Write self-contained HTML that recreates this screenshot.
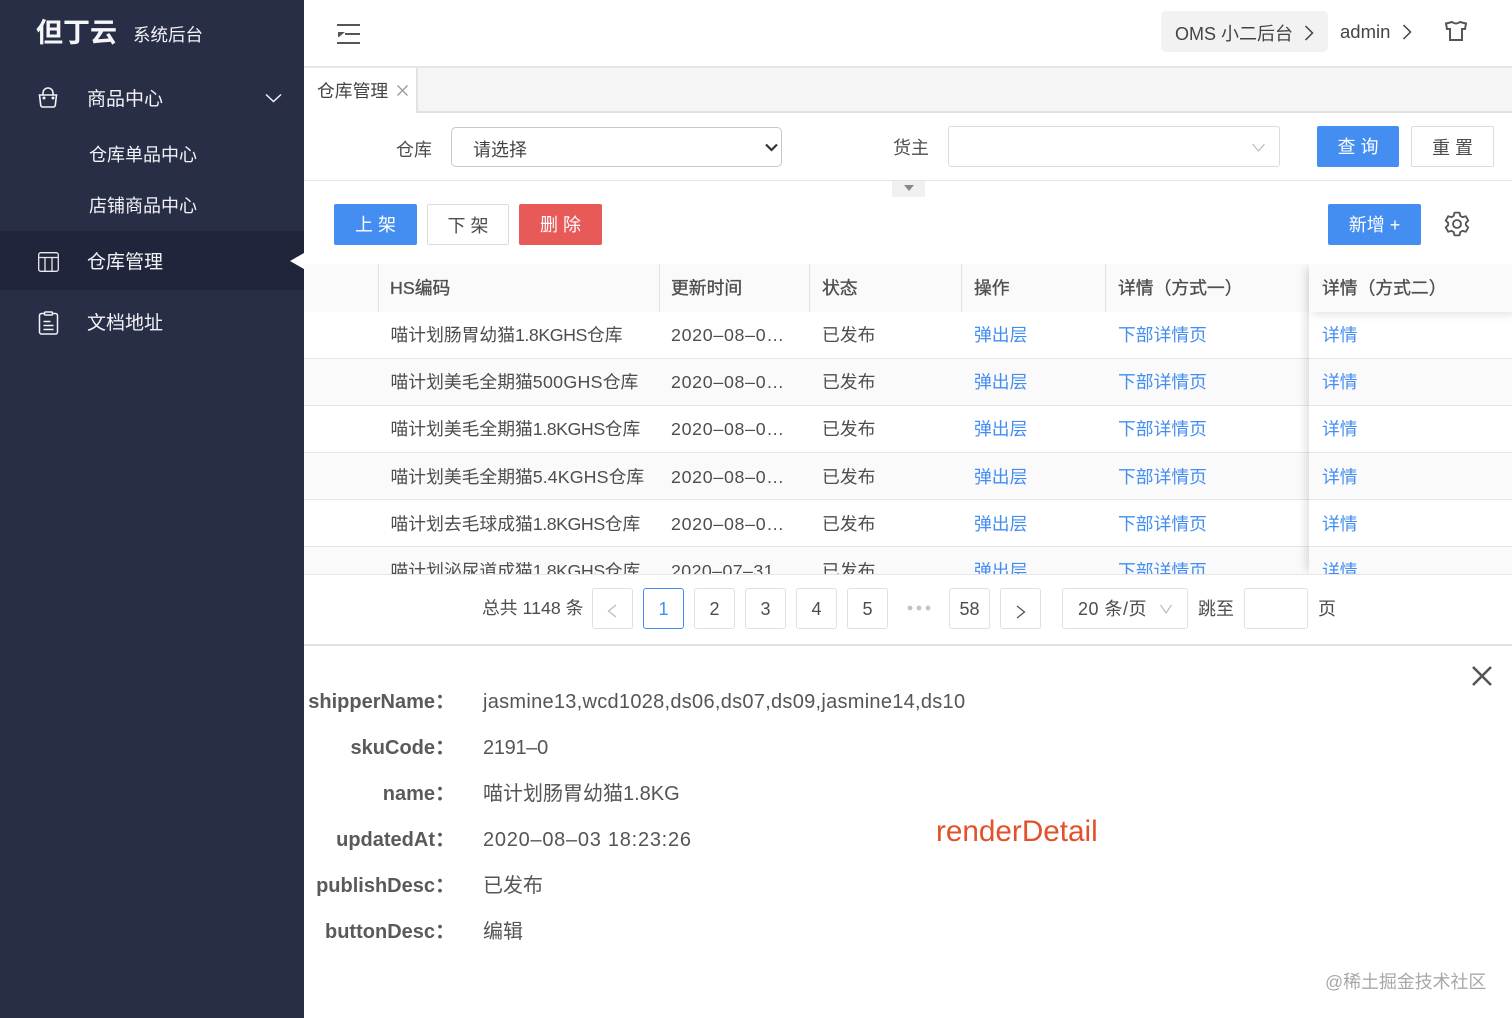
<!DOCTYPE html>
<html lang="zh"><head><meta charset="utf-8"><title>仓库管理</title>
<style>
*{box-sizing:border-box}
html,body{margin:0;padding:0;width:1512px;height:1018px;overflow:hidden;background:#fff}
body{position:relative;font-family:"Liberation Sans","Noto Sans CJK SC",sans-serif;color:#4d4d4d;font-size:17.8px}
.a{position:absolute;white-space:nowrap}
.t{position:absolute;white-space:nowrap;line-height:24px;height:24px}
.sb{position:absolute;left:0;top:0;width:304px;height:1018px;background:#292e47}
.w{color:#f2f3f6}
.btn{position:absolute;height:41px;line-height:42px;text-align:center;border-radius:2px;font-size:18px}
.blue{background:#448ef2;color:#fff}
.line{background:#fff;border:1px solid #dcdcdc;color:#4d4d4d}
.red{background:#e85a57;color:#fff}
.pg{position:absolute;top:588px;height:41px;width:41px;border:1px solid #e0e0e0;border-radius:3px;background:#fff;text-align:center;line-height:41px;font-size:18px;color:#4d4d4d}
.lk{color:#448ef2}
.lab{position:absolute;left:304px;width:152px;text-align:right;font-weight:bold;font-size:20px;line-height:28px;color:#5a5a5a;white-space:nowrap}
.val{position:absolute;left:483px;font-size:20px;line-height:28px;color:#555;white-space:nowrap}
svg{position:absolute;overflow:visible}
.th{color:#505050;-webkit-text-stroke:.35px #505050}
.n{letter-spacing:-.45px}
.d{letter-spacing:.7px}
</style></head><body>

<div class="sb"></div>
<div class="a" style="left:36px;top:10px;font-size:27px;line-height:42px;font-weight:bold;color:#f5f6f8;font-family:'Noto Sans CJK SC',sans-serif">但丁云</div>
<div class="t w" style="left:133px;top:23px;font-size:17.5px">系统后台</div>

<svg style="left:38px;top:87px" width="20" height="22" viewBox="0 0 20 22" fill="none" stroke="#f2f3f6" stroke-width="1.600"><path d="M1.500 8h17l-1.200 10a2 2 0 0 1-2 2H4.700a2 2 0 0 1-2-2z"/><path d="M5 8V6a5 5 0 0 1 10 0v2"/><circle cx="6" cy="11" r=".7" fill="#f2f3f6"/><circle cx="15" cy="11" r=".7" fill="#f2f3f6"/></svg>
<div class="t w" style="left:87px;top:88px;font-size:19px">商品中心</div>
<svg style="left:265px;top:93px" width="17" height="10" viewBox="0 0 17 10" fill="none" stroke="#f2f3f6" stroke-width="1.500"><path d="M1 1.500l7.500 7 7.500-7"/></svg>
<div class="t w" style="left:89px;top:143px;font-size:18px">仓库单品中心</div>
<div class="t w" style="left:89px;top:194px;font-size:18px">店铺商品中心</div>

<div class="a" style="left:0;top:231px;width:304px;height:59px;background:#21253b"></div>
<svg style="left:38px;top:252px" width="21" height="20" viewBox="0 0 21 20" fill="none" stroke="#e8e9ee" stroke-width="1.300"><rect x=".7" y=".7" width="19.600" height="18.600" rx="2"/><path d="M.7 5.500h19.600M7 5.500v13.800M14 5.500v13.800"/></svg>
<div class="t w" style="left:87px;top:251px;font-size:19px">仓库管理</div>
<svg style="left:290px;top:253px" width="14" height="16" viewBox="0 0 14 16"><path d="M14 0v16L0 8z" fill="#fff"/></svg>

<svg style="left:38px;top:311px" width="21" height="24" viewBox="0 0 21 24" fill="none" stroke="#f2f3f6" stroke-width="1.500"><path d="M6 2.500H3.500a2 2 0 0 0-2 2V21a2 2 0 0 0 2 2h14a2 2 0 0 0 2-2V4.500a2 2 0 0 0-2-2H15"/><rect x="6.500" y="1" width="8" height="3" rx="1"/><path d="M5.500 10.500h7M5.500 14.500h10M5.500 18.500h10"/></svg>
<div class="t w" style="left:87px;top:312px;font-size:19px">文档地址</div>

<svg style="left:337px;top:24px" width="23" height="21" viewBox="0 0 23 21" fill="none" stroke="#555" stroke-width="2"><path d="M0 1h23M8 10h15M0 19h23"/><path d="M1 8h7L2 13H1z" fill="#555" stroke="none"/></svg>
<div class="a" style="left:1161px;top:11px;width:167px;height:41px;background:#f2f2f2;border-radius:5px"></div>
<div class="t" style="left:1175px;top:21.500px;font-size:18px;color:#444">OMS 小二后台</div>
<svg style="left:1304px;top:25px" width="10" height="16" viewBox="0 0 10 16" fill="none" stroke="#444" stroke-width="1.500"><path d="M1.500 1l7 7-7 7"/></svg>
<div class="t" style="left:1340px;top:20px;font-size:18.500px;color:#444">admin</div>
<svg style="left:1402px;top:24px" width="10" height="16" viewBox="0 0 10 16" fill="none" stroke="#444" stroke-width="1.500"><path d="M1.500 1l7 7-7 7"/></svg>
<svg style="left:1445px;top:21px" width="22" height="20" viewBox="0 0 22 20" fill="none" stroke="#555" stroke-width="2"><path d="M7 1L1 2.500 2 8h3v11h12V8h3l1-5.500L15 1q-4 3-8 0z"/></svg>

<div class="a" style="left:304px;top:66px;width:1208px;height:2px;background:#e6e6e6"></div>
<div class="a" style="left:416px;top:68px;width:1096px;height:45px;background:#f5f5f5;border-left:2px solid #e2e2e2;border-bottom:2px solid #e2e2e2"></div>
<div class="t" style="left:317px;top:79px;font-size:17.800px;color:#444">仓库管理</div>
<svg style="left:397px;top:85px" width="11" height="11" viewBox="0 0 11 11" fill="none" stroke="#999" stroke-width="1.300"><path d="M.5.500l10 10M10.500.500l-10 10"/></svg>

<div class="t" style="left:396px;top:138px;font-size:18px">仓库</div>
<div class="a" style="left:451px;top:127px;width:331px;height:40px;border:1px solid #c8c8c8;border-radius:5px"></div>
<div class="t" style="left:473px;top:138px;font-size:18px;color:#444">请选择</div>
<svg style="left:765px;top:143px" width="13" height="9" viewBox="0 0 13 9" fill="none" stroke="#333" stroke-width="2.200"><path d="M1 1.500l5.500 5.500 5.500-5.500"/></svg>

<div class="t" style="left:893px;top:136px;font-size:18px">货主</div>
<div class="a" style="left:948px;top:126px;width:332px;height:41px;border:1px solid #dcdcdc;border-radius:3px"></div>
<svg style="left:1252px;top:143px" width="13" height="9" viewBox="0 0 13 9" fill="none" stroke="#bbb" stroke-width="1.200"><path d="M.5 1l6 7 6-7"/></svg>
<div class="btn blue" style="left:1317px;top:126px;width:82px">查 询</div>
<div class="btn line" style="left:1411px;top:126px;width:83px">重 置</div>

<div class="a" style="left:304px;top:180px;width:1208px;height:1px;background:#e6e6e6"></div>
<div class="a" style="left:892px;top:181px;width:33px;height:16px;background:#f0f0f0"></div>
<svg style="left:904px;top:185px" width="10" height="6" viewBox="0 0 10 6"><path d="M0 0h10L5 6z" fill="#888"/></svg>

<div class="btn blue" style="left:334px;top:204px;width:83px">上 架</div>
<div class="btn line" style="left:427px;top:204px;width:82px">下 架</div>
<div class="btn red" style="left:519px;top:204px;width:83px">删 除</div>
<div class="btn blue" style="left:1328px;top:204px;width:93px">新增 +</div>
<svg style="left:1444px;top:211px" width="26" height="26" viewBox="0 0 24 24" fill="none" stroke="#555" stroke-width="1.700" stroke-linejoin="round"><circle cx="12" cy="12" r="3.700"/><path d="M9.700 1.500h4.600l.7 3 2.100 1.200 3-.9 2.300 4-2.200 2.100v2.200l2.200 2.100-2.300 4-3-.9-2.100 1.200-.7 3H9.700l-.7-3-2.100-1.200-3 .9-2.300-4 2.200-2.100v-2.200L1.600 8.800l2.300-4 3 .9L9 4.500z"/></svg>

<!-- table -->
<div class="a" style="left:304px;top:264px;width:1208px;height:310px;overflow:hidden">
 <div class="a" style="left:0;top:0;width:1208px;height:48px;background:#fafafa"></div>
 <div class="a" style="left:74px;top:0;width:1px;height:48px;background:#e2e2e2"></div>
 <div class="a" style="left:355px;top:0;width:1px;height:48px;background:#e2e2e2"></div>
 <div class="a" style="left:505px;top:0;width:1px;height:48px;background:#e2e2e2"></div>
 <div class="a" style="left:657px;top:0;width:1px;height:48px;background:#e2e2e2"></div>
 <div class="a" style="left:801px;top:0;width:1px;height:48px;background:#e2e2e2"></div>
 <div class="a" style="left:0;top:94px;width:1208px;height:47px;background:#fafafa;border-top:1px solid #e6e6e6"></div>
 <div class="a" style="left:0;top:141px;width:1208px;height:47px;border-top:1px solid #e6e6e6"></div>
 <div class="a" style="left:0;top:188px;width:1208px;height:47px;background:#fafafa;border-top:1px solid #e6e6e6"></div>
 <div class="a" style="left:0;top:235px;width:1208px;height:47px;border-top:1px solid #e6e6e6"></div>
 <div class="a" style="left:0;top:282px;width:1208px;height:47px;background:#fafafa;border-top:1px solid #e6e6e6"></div>

 <div class="t th" style="left:86px;top:12px">HS编码</div>
 <div class="t th" style="left:367px;top:12px">更新时间</div>
 <div class="t th" style="left:518px;top:12px">状态</div>
 <div class="t th" style="left:670px;top:12px">操作</div>
 <div class="t th" style="left:814px;top:12px">详情（方式一）</div>

 <div class="t" style="left:86.500px;top:59px">喵计划肠胃幼猫<span class="n">1.8KGHS</span>仓库</div>
 <div class="t d" style="left:367px;top:59px">2020–08–0…</div><div class="t" style="left:518px;top:59px">已发布</div><div class="t lk" style="left:670px;top:59px">弹出层</div><div class="t lk" style="left:814px;top:59px">下部详情页</div>
 <div class="t" style="left:86.500px;top:106px">喵计划美毛全期猫<span style="letter-spacing:.3px">500GHS</span>仓库</div>
 <div class="t d" style="left:367px;top:106px">2020–08–0…</div><div class="t" style="left:518px;top:106px">已发布</div><div class="t lk" style="left:670px;top:106px">弹出层</div><div class="t lk" style="left:814px;top:106px">下部详情页</div>
 <div class="t" style="left:86.500px;top:153px">喵计划美毛全期猫<span class="n">1.8KGHS</span>仓库</div>
 <div class="t d" style="left:367px;top:153px">2020–08–0…</div><div class="t" style="left:518px;top:153px">已发布</div><div class="t lk" style="left:670px;top:153px">弹出层</div><div class="t lk" style="left:814px;top:153px">下部详情页</div>
 <div class="t" style="left:86.500px;top:200.500px">喵计划美毛全期猫<span style="letter-spacing:.1px">5.4KGHS</span>仓库</div>
 <div class="t d" style="left:367px;top:200.500px">2020–08–0…</div><div class="t" style="left:518px;top:200.500px">已发布</div><div class="t lk" style="left:670px;top:200.500px">弹出层</div><div class="t lk" style="left:814px;top:200.500px">下部详情页</div>
 <div class="t" style="left:86.500px;top:247.500px">喵计划去毛球成猫<span class="n">1.8KGHS</span>仓库</div>
 <div class="t d" style="left:367px;top:247.500px">2020–08–0…</div><div class="t" style="left:518px;top:247.500px">已发布</div><div class="t lk" style="left:670px;top:247.500px">弹出层</div><div class="t lk" style="left:814px;top:247.500px">下部详情页</div>
 <div class="t" style="left:86.500px;top:295px">喵计划泌尿道成猫<span class="n">1.8KGHS</span>仓库</div>
 <div class="t" style="left:367px;top:295px;letter-spacing:.4px">2020–07–31</div><div class="t" style="left:518px;top:295px">已发布</div><div class="t lk" style="left:670px;top:295px">弹出层</div><div class="t lk" style="left:814px;top:295px">下部详情页</div>

 <!-- fixed column -->
 <div class="a" style="left:1005px;top:0;width:210px;height:310px;background:#fff;box-shadow:-6px 0 8px -3px rgba(0,0,0,.13)">
  <div class="a" style="left:0;top:0;width:210px;height:48px;background:#fafafa;box-shadow:0 6px 8px -3px rgba(0,0,0,.1)"></div>
  <div class="a" style="left:0;top:94px;width:210px;height:47px;background:#fafafa;border-top:1px solid #e6e6e6"></div>
  <div class="a" style="left:0;top:141px;width:210px;height:47px;border-top:1px solid #e6e6e6"></div>
  <div class="a" style="left:0;top:188px;width:210px;height:47px;background:#fafafa;border-top:1px solid #e6e6e6"></div>
  <div class="a" style="left:0;top:235px;width:210px;height:47px;border-top:1px solid #e6e6e6"></div>
  <div class="a" style="left:0;top:282px;width:210px;height:47px;background:#fafafa;border-top:1px solid #e6e6e6"></div>
  <div class="t th" style="left:13px;top:12px">详情（方式二）</div>
  <div class="t lk" style="left:13px;top:59px">详情</div>
  <div class="t lk" style="left:13px;top:106px">详情</div>
  <div class="t lk" style="left:13px;top:153px">详情</div>
  <div class="t lk" style="left:13px;top:200.500px">详情</div>
  <div class="t lk" style="left:13px;top:247.500px">详情</div>
  <div class="t lk" style="left:13px;top:295px">详情</div>
 </div>
</div>
<div class="a" style="left:304px;top:574px;width:1208px;height:1px;background:#e6e6e6"></div>

<!-- pagination -->
<div class="t" style="left:482px;top:596px;font-size:17.800px">总共 1148 条</div>
<div class="pg" style="left:592px"></div>
<svg style="left:607px;top:604px" width="10" height="14" viewBox="0 0 10 14" fill="none" stroke="#bbb" stroke-width="1.300"><path d="M9 1L1.500 7 9 13"/></svg>
<div class="pg" style="left:643px;border-color:#448ef2;color:#448ef2">1</div>
<div class="pg" style="left:694px">2</div>
<div class="pg" style="left:745px">3</div>
<div class="pg" style="left:796px">4</div>
<div class="pg" style="left:847px">5</div>
<svg style="left:907px;top:605px" width="24" height="6" viewBox="0 0 24 6" fill="#c4c4c4"><circle cx="3" cy="3" r="2.400"/><circle cx="12" cy="3" r="2.400"/><circle cx="21" cy="3" r="2.400"/></svg>
<div class="pg" style="left:949px">58</div>
<div class="pg" style="left:1000px"></div>
<svg style="left:1016px;top:605px" width="10" height="14" viewBox="0 0 10 14" fill="none" stroke="#555" stroke-width="1.300"><path d="M1 1l7.500 6L1 13"/></svg>
<div class="pg" style="left:1062px;width:126px"></div>
<div class="t" style="left:1078px;top:597px;font-size:18px;letter-spacing:.5px">20 条/页</div>
<svg style="left:1160px;top:604px" width="12" height="10" viewBox="0 0 12 10" fill="none" stroke="#bbb" stroke-width="1.200"><path d="M.5 1l5.500 8 5.500-8"/></svg>
<div class="t" style="left:1198px;top:597px;font-size:18px">跳至</div>
<div class="pg" style="left:1244px;width:64px"></div>
<div class="t" style="left:1318px;top:597px;font-size:18px">页</div>
<div class="a" style="left:304px;top:644px;width:1208px;height:2px;background:#e2e2e2"></div>

<!-- detail -->
<svg style="left:1472px;top:666px" width="20" height="20" viewBox="0 0 20 20" fill="none" stroke="#555" stroke-width="2.600"><path d="M1 1l18 18M19 1L1 19"/></svg>
<div class="lab" style="left:303px;top:687.500px">shipperName：</div><div class="val" style="top:687.500px;letter-spacing:.28px">jasmine13,wcd1028,ds06,ds07,ds09,jasmine14,ds10</div>
<div class="lab" style="left:303px;top:733.500px">skuCode：</div><div class="val" style="top:733.500px;letter-spacing:-.3px">2191–0</div>
<div class="lab" style="left:303px;top:779.500px">name：</div><div class="val" style="top:779.500px">喵计划肠胃幼猫1.8KG</div>
<div class="lab" style="left:303px;top:825.500px">updatedAt：</div><div class="val" style="top:825.500px;letter-spacing:.74px">2020–08–03 18:23:26</div>
<div class="lab" style="left:303px;top:871.500px">publishDesc：</div><div class="val" style="top:871.500px">已发布</div>
<div class="lab" style="left:303px;top:917.500px">buttonDesc：</div><div class="val" style="top:917.500px">编辑</div>
<div class="a" style="left:936px;top:812.500px;font-size:29.700px;line-height:38px;color:#e2512b">renderDetail</div>
<div class="a" style="left:1325px;top:969.500px;font-size:17.900px;line-height:24px;color:#a8a8a8">@稀土掘金技术社区</div>
</body></html>
